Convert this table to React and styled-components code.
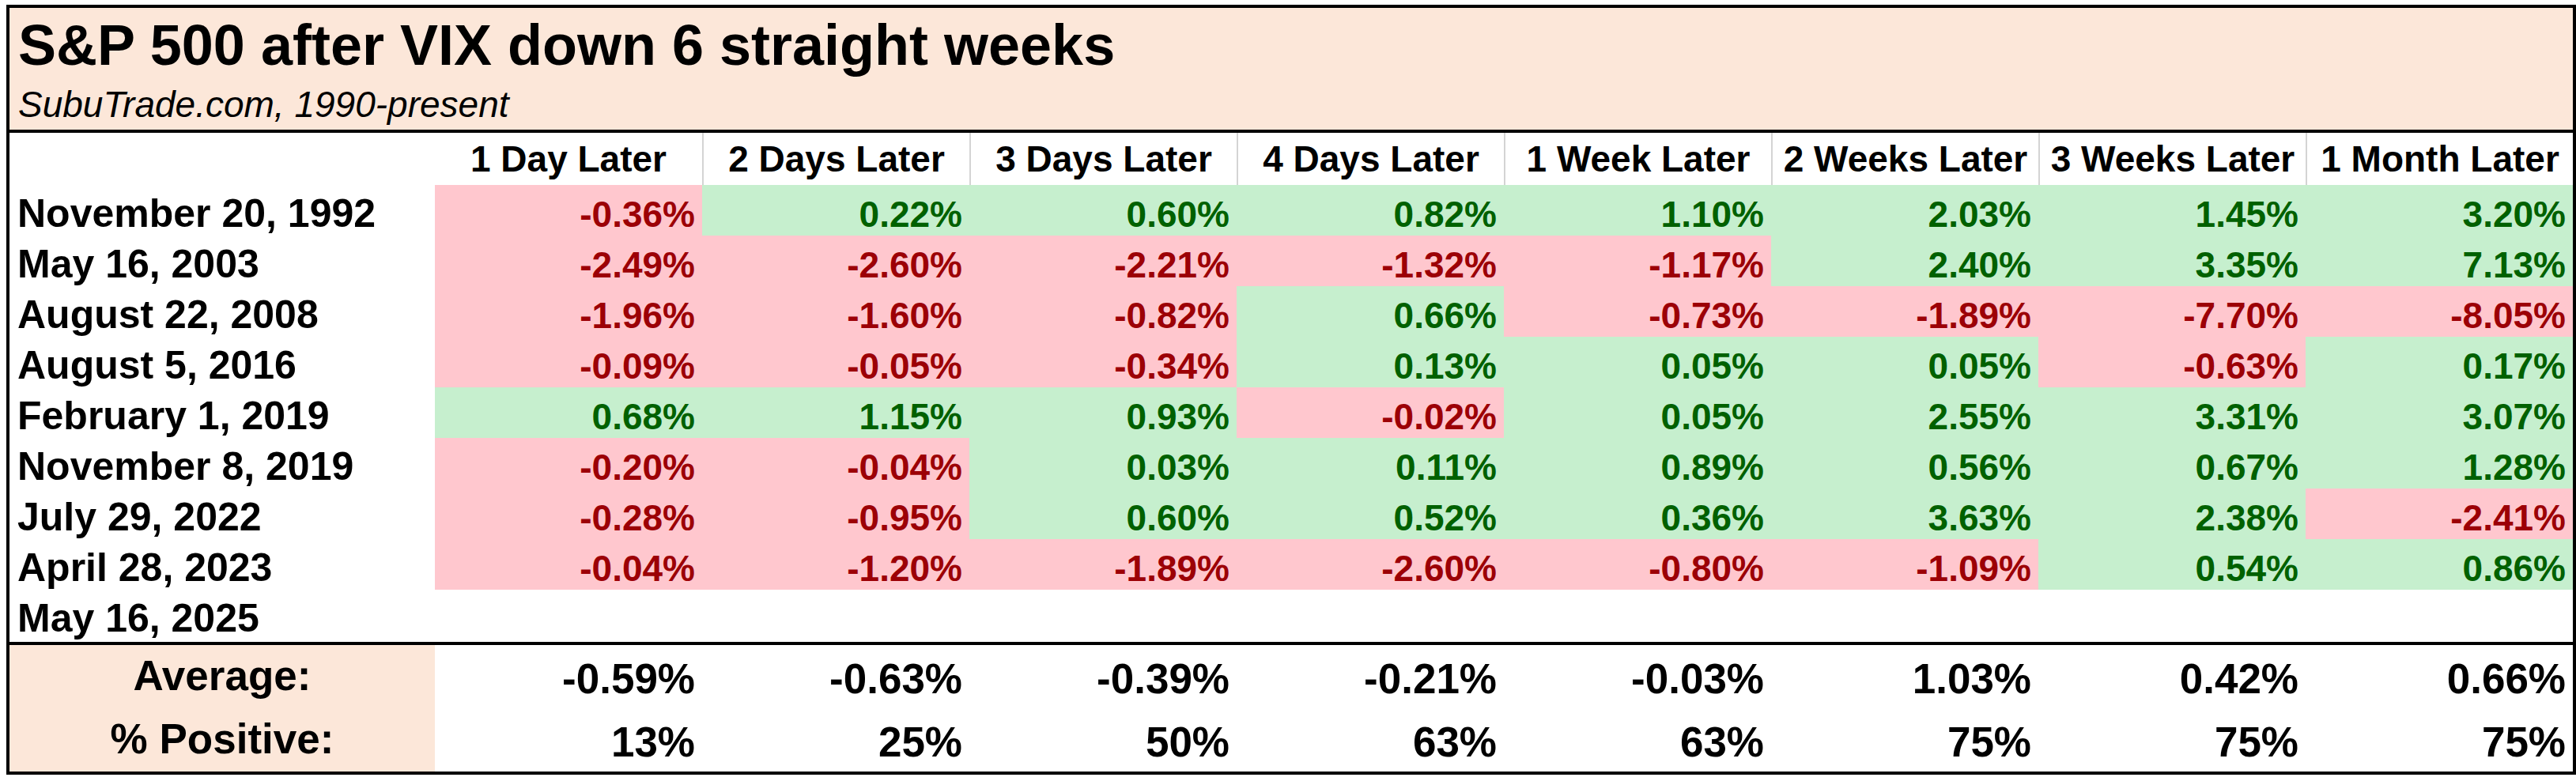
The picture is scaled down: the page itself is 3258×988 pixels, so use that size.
import React from "react";
import styled, { createGlobalStyle } from "styled-components";

const Global = createGlobalStyle`
  html, body { margin: 0; padding: 0; background: #ffffff; }
  body { font-family: "Liberation Sans", Arial, Helvetica, sans-serif; }
`;

const Page = styled.div`
  padding: 6px 0 0 8px;
`;

const Frame = styled.div`
  box-sizing: border-box;
  width: 3250px;
  border: 4px solid #000;
  background: #fff;
  color: #000;
`;

const TitleBand = styled.div`
  box-sizing: border-box;
  height: 158px;
  background: #fce7d9;
  border-bottom: 4px solid #000;
  padding: 7px 0 0 11px;
  display: flex;
  flex-direction: column;
`;

const Title = styled.div`
  font-size: 72px;
  line-height: 80px;
  font-weight: 700;
  white-space: nowrap;
`;

const Subtitle = styled.div`
  margin-top: 11px;
  font-size: 46px;
  line-height: 48px;
  font-style: italic;
  white-space: nowrap;
`;

const Table = styled.div`
  display: grid;
  grid-template-columns: 538px repeat(8, 338px);
  grid-template-rows: 66px repeat(8, 64px) 66px;
`;

const HeadCell = styled.div`
  font-size: 46px;
  line-height: 66px;
  font-weight: 700;
  text-align: center;
  white-space: nowrap;
  border-left: ${(p) => (p.$sep ? "2px solid #d4d4d4" : "none")};
`;

const DateCell = styled.div`
  box-sizing: border-box;
  padding: 8px 0 0 10px;
  font-size: 50px;
  line-height: 56px;
  font-weight: 700;
  white-space: nowrap;
`;

const ValueCell = styled.div`
  box-sizing: border-box;
  padding: 9px 9px 0 0;
  font-size: 46px;
  line-height: 56px;
  font-weight: 700;
  text-align: right;
  white-space: nowrap;
  background: ${(p) => (p.$tone === "up" ? "#c6efce" : p.$tone === "down" ? "#ffc7ce" : "transparent")};
  color: ${(p) => (p.$tone === "up" ? "#006100" : p.$tone === "down" ? "#9c0006" : "#000")};
`;

const Summary = styled.div`
  display: grid;
  grid-template-columns: 538px repeat(8, 338px);
  grid-template-rows: 80px 80px;
  border-top: 4px solid #000;
`;

const SummaryLabel = styled.div`
  background: #fce7d9;
  font-size: 53px;
  line-height: 78px;
  font-weight: 700;
  text-align: center;
  white-space: nowrap;
`;

const SummaryValue = styled.div`
  box-sizing: border-box;
  padding: 3px 9px 0 0;
  font-size: 53px;
  line-height: 80px;
  font-weight: 700;
  text-align: right;
  white-space: nowrap;
`;

const headers = [
  "1 Day Later",
  "2 Days Later",
  "3 Days Later",
  "4 Days Later",
  "1 Week Later",
  "2 Weeks Later",
  "3 Weeks Later",
  "1 Month Later",
];

const rows = [
  ["November 20, 1992", [-0.36, 0.22, 0.6, 0.82, 1.1, 2.03, 1.45, 3.2]],
  ["May 16, 2003", [-2.49, -2.6, -2.21, -1.32, -1.17, 2.4, 3.35, 7.13]],
  ["August 22, 2008", [-1.96, -1.6, -0.82, 0.66, -0.73, -1.89, -7.7, -8.05]],
  ["August 5, 2016", [-0.09, -0.05, -0.34, 0.13, 0.05, 0.05, -0.63, 0.17]],
  ["February 1, 2019", [0.68, 1.15, 0.93, -0.02, 0.05, 2.55, 3.31, 3.07]],
  ["November 8, 2019", [-0.2, -0.04, 0.03, 0.11, 0.89, 0.56, 0.67, 1.28]],
  ["July 29, 2022", [-0.28, -0.95, 0.6, 0.52, 0.36, 3.63, 2.38, -2.41]],
  ["April 28, 2023", [-0.04, -1.2, -1.89, -2.6, -0.8, -1.09, 0.54, 0.86]],
  ["May 16, 2025", null],
];

const averages = ["-0.59%", "-0.63%", "-0.39%", "-0.21%", "-0.03%", "1.03%", "0.42%", "0.66%"];
const positives = ["13%", "25%", "50%", "63%", "63%", "75%", "75%", "75%"];

export default function App() {
  return (
    <>
      <Global />
      <Page>
        <Frame>
          <TitleBand>
            <Title>S&amp;P 500 after VIX down 6 straight weeks</Title>
            <Subtitle>SubuTrade.com, 1990-present</Subtitle>
          </TitleBand>
          <Table>
            <HeadCell />
            {headers.map((h, i) => (
              <HeadCell key={h} $sep={i > 0}>
                {h}
              </HeadCell>
            ))}
            {rows.map(([date, vals]) => (
              <React.Fragment key={date}>
                <DateCell>{date}</DateCell>
                {(vals || Array(8).fill(null)).map((v, i) => (
                  <ValueCell key={i} $tone={v == null ? "none" : v >= 0 ? "up" : "down"}>
                    {v == null ? "" : `${v.toFixed(2)}%`}
                  </ValueCell>
                ))}
              </React.Fragment>
            ))}
          </Table>
          <Summary>
            <SummaryLabel>Average:</SummaryLabel>
            {averages.map((a, i) => (
              <SummaryValue key={i}>{a}</SummaryValue>
            ))}
            <SummaryLabel>% Positive:</SummaryLabel>
            {positives.map((p, i) => (
              <SummaryValue key={i}>{p}</SummaryValue>
            ))}
          </Summary>
        </Frame>
      </Page>
    </>
  );
}
